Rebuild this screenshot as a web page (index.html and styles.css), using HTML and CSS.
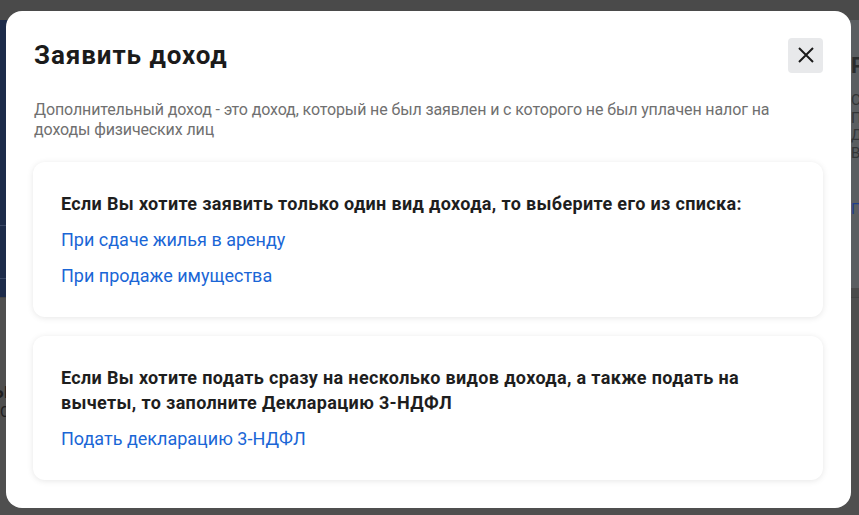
FILE: index.html
```html
<!DOCTYPE html>
<html lang="ru">
<head>
	<meta charset="UTF-8">
	<title>Заявить доход</title>
	<link rel="stylesheet" href="styles.css">
</head>
<body>

	<div class="page">
		<div class="page-top"></div>
		<div class="page-main">
			<div class="hero">
				<div class="hero-line hero-line-1"></div>
				<div class="hero-line hero-line-2"></div>
			</div>
			<div class="side-panel">
				<p class="side-title">Расчёт</p>
				<p class="side-text">Сумма налога</p>
				<p class="side-text">Платёж</p>
				<p class="side-text">Доход</p>
				<p class="side-text">Вычеты</p>
				<p class="side-link">Подробнее</p>
			</div>
		</div>
		<div class="page-section">
			<p class="section-title">Мои доходы</p>
			<p class="section-text">Список</p>
		</div>
	</div>

	<div class="overlay">
		<div class="modal">
			<div class="modal-header">
				<h1 class="modal-title">Заявить доход</h1>
				<button class="close-btn" type="button" aria-label="Закрыть">
					<svg width="18" height="18" viewBox="0 0 18 18">
						<path d="M2 2 L16 16 M16 2 L2 16" stroke="#1b1b1b" stroke-width="2" fill="none"/>
					</svg>
				</button>
			</div>

			<p class="modal-desc">Дополнительный доход - это доход, который не был заявлен и с которого не был уплачен налог на доходы физических лиц</p>

			<div class="card">
				<p class="card-title">Если Вы хотите заявить только один вид дохода, то выберите его из списка:</p>
				<a class="card-link" href="#">При сдаче жилья в аренду</a>
				<a class="card-link" href="#">При продаже имущества</a>
			</div>

			<div class="card">
				<p class="card-title">Если Вы хотите подать сразу на несколько видов дохода, а также подать на вычеты, то заполните Декларацию 3-НДФЛ</p>
				<a class="card-link" href="#">Подать декларацию 3-НДФЛ</a>
			</div>
		</div>
	</div>

</body>
</html>
```

FILE: styles.css
```css
* {
	margin: 0;
	padding: 0;
	box-sizing: border-box;
}

body {
	background: #4b4b4b;
	font-family: Roboto, "Liberation Sans", sans-serif;
	overflow: hidden;
}

/* page behind the dialog, already dimmed */

.page {
	height: 515px;
}

.page-top {
	height: 20px;
	background: #4a4a4a;
}

.page-main {
	display: flex;
	height: 277px;
}

.hero {
	flex: 1;
	background: #1d2b4a;
	display: flex;
	flex-direction: column;
	padding-top: 205px;
	gap: 52px;
}

.hero-line {
	height: 1px;
	background: #3a4866;
}

.side-panel {
	width: 320px;
	height: 268px;
	background: #5b5e61;
	padding: 33px 0 0 312px;
	color: #2a2b2c;
	white-space: nowrap;
	overflow: hidden;
}

.side-title {
	font-size: 22px;
	font-weight: 700;
	margin-bottom: 14px;
}

.side-text {
	font-size: 15px;
	line-height: 17.5px;
	color: #333536;
}

.side-link {
	font-size: 15px;
	color: #1f3f8c;
	margin-top: 38px;
}

.page-section {
	height: 218px;
	background: #4f4f4f;
	border-top: 1px solid #444;
	padding: 80px 0 0 0;
	color: #1e1e1e;
}

.section-title {
	font-size: 22px;
	font-weight: 500;
	margin-left: -120px;
}

.section-text {
	font-size: 15px;
}

/* dialog */

.overlay {
	position: fixed;
	top: 0;
	left: 0;
	right: 0;
	bottom: 0;
	display: flex;
	align-items: center;
	justify-content: center;
}

.modal {
	width: 845px;
	background: #fff;
	border-radius: 16px;
	padding: 27px 28px 28px 27px;
	margin: 3px 2px 0 0;
}

.modal-header {
	display: flex;
	align-items: center;
	justify-content: space-between;
	padding-left: 1px;
}

.modal-title {
	font-size: 26px;
	font-weight: 700;
	color: #1b1b1b;
	letter-spacing: 0.9px;
}

.close-btn {
	width: 35px;
	height: 35px;
	border: none;
	border-radius: 4px;
	background: #e8e9eb;
	display: flex;
	align-items: center;
	justify-content: center;
	cursor: pointer;
}

.modal-desc {
	margin: 27px 0 22px 1px;
	font-size: 16px;
	line-height: 20px;
	color: #707070;
	letter-spacing: -0.12px;
}

.card {
	background: #fff;
	border-radius: 12px;
	box-shadow: 0 1px 6px rgba(0, 0, 0, 0.1);
	padding: 29px 28px 29px 28px;
	display: flex;
	flex-direction: column;
	align-items: flex-start;
	gap: 12px;
}

.card + .card {
	margin-top: 19px;
}

.card-title {
	font-size: 18px;
	font-weight: 700;
	line-height: 25px;
	color: #1e1e1e;
	letter-spacing: 0.35px;
}

.card-link {
	font-size: 18px;
	line-height: 24px;
	color: #1a66d6;
	text-decoration: none;
}
```
